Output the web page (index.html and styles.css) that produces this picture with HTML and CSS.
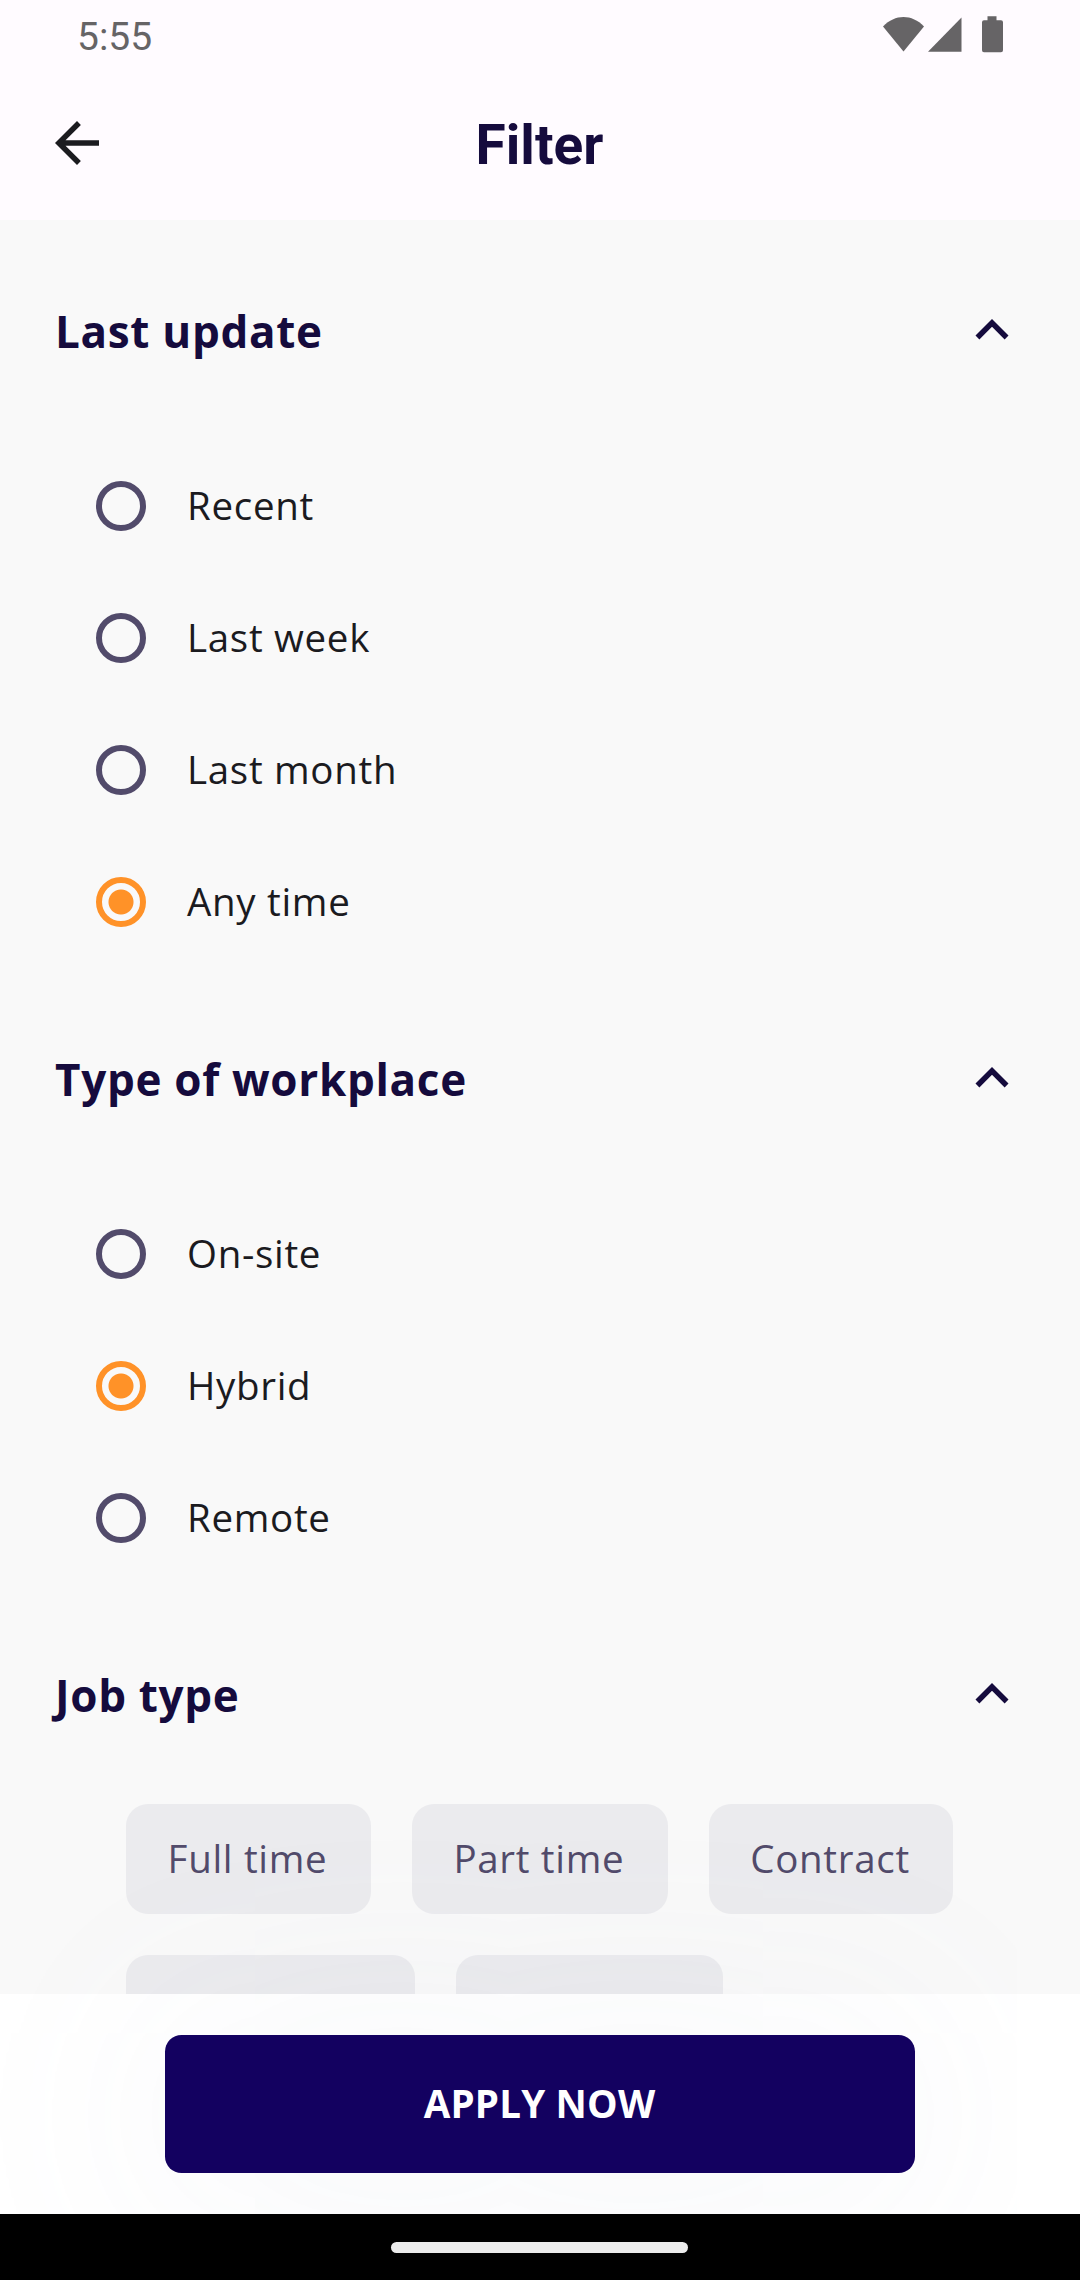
FILE: index.html
```html
<!DOCTYPE html>
<html lang="en">
<head>
<meta charset="utf-8">
<title>Filter</title>
<link rel="stylesheet" href="styles.css">
</head>
<body>
<svg class="defs" width="0" height="0">
  <symbol id="chevron-up" viewBox="0 0 24 24"><path d="M12 8l-6 6 1.41 1.41L12 10.83l4.59 4.58L18 14z"/></symbol>
</svg>
<div class="screen">
  <header class="top">
    <div class="status">
      <span class="clock">5:55</span>
      <svg class="status-icons" width="122" height="38" viewBox="0 0 122 38" fill="#666466">
        <path d="M1 11.500C13-1.200 30-1.200 42 11.500L21.500 36.500z"/>
        <path d="M79.500 2.500V36.800H46z"/>
        <path d="M105.500 1.300h9v4h4.500q2 0 2 2v28q0 2-2 2h-17q-2 0-2-2V7.300q0-2 2-2h3.500z"/>
      </svg>
    </div>
    <div class="appbar">
      <svg class="back" viewBox="0 0 24 24"><path d="M20 11H7.830l5.590-5.590L12 4l-8 8 8 8 1.410-1.410L7.830 13H20z"/></svg>
      <h1 class="title">Filter</h1>
    </div>
  </header>
  <main class="content">
    <section>
      <div class="section-head"><h2>Last update</h2><svg class="chevron"><use href="#chevron-up"/></svg></div>
      <div class="option"><span class="radio"></span><span class="label">Recent</span></div>
      <div class="option"><span class="radio"></span><span class="label">Last week</span></div>
      <div class="option"><span class="radio"></span><span class="label">Last month</span></div>
      <div class="option"><span class="radio checked"></span><span class="label">Any time</span></div>
    </section>
    <section>
      <div class="section-head"><h2>Type of workplace</h2><svg class="chevron"><use href="#chevron-up"/></svg></div>
      <div class="option"><span class="radio"></span><span class="label">On-site</span></div>
      <div class="option"><span class="radio checked"></span><span class="label">Hybrid</span></div>
      <div class="option"><span class="radio"></span><span class="label">Remote</span></div>
    </section>
    <section>
      <div class="section-head"><h2>Job type</h2><svg class="chevron"><use href="#chevron-up"/></svg></div>
      <div class="chips">
        <span class="chip">Full time</span>
        <span class="chip">Part time</span>
        <span class="chip">Contract</span>
        <span class="chip chip-wide"></span>
        <span class="chip chip-mid"></span>
      </div>
    </section>
  </main>
  <footer class="bottom">
    <button class="apply">APPLY NOW</button>
  </footer>
  <div class="navbar"><span class="handle"></span></div>
</div>
</body>
</html>
```
FILE: styles.css
```css
* { box-sizing: border-box; }
body { margin: 0; font-family: "Open Sans", "Noto Sans", sans-serif; }
h1, h2 { margin: 0; }
.defs { display: block; width: 0; height: 0; }

.screen {
  display: flex;
  flex-direction: column;
  width: 1080px;
  height: 2280px;
  overflow: hidden;
  background: #f9f9f9;
}

.top { flex: none; height: 220px; background: #fffbff; }
.status {
  display: flex;
  justify-content: space-between;
  align-items: flex-start;
  height: 66px;
  padding: 15px 76px 0 77px;
}
.clock {
  font: 400 39px/45px Roboto, sans-serif;
  color: #666466;
}
.appbar {
  display: grid;
  grid-template-columns: 66px 1fr 66px;
  align-items: center;
  height: 154px;
  padding: 0 44px;
}
.back { width: 66px; height: 66px; fill: #1b1b1f; }
.title {
  padding: 4px 1px 0 0;
  font: 700 55px/66px Roboto, sans-serif;
  color: #150b3d;
  text-align: center;
}

.content { flex: 1; min-height: 0; overflow: hidden; }
.section-head {
  display: flex;
  justify-content: space-between;
  align-items: center;
  height: 220px;
  padding: 0 55px;
}
.section-head h2 {
  padding-top: 2px;
  font-size: 44px;
  line-height: 60px;
  font-weight: 700;
  letter-spacing: 0.6875px;
  color: #150b3d;
}
.chevron { width: 66px; height: 66px; fill: #150b3d; }

.option {
  display: flex;
  align-items: center;
  gap: 41px;
  height: 132px;
  padding-left: 96px;
  font-size: 38.5px;
  line-height: 52px;
  letter-spacing: 0.6875px;
  color: #1b1b1f;
}
.label { padding-bottom: 2px; }
.radio {
  width: 50px;
  height: 50px;
  border: 6px solid #524b6b;
  border-radius: 50%;
}
.radio.checked {
  border-color: #ff9228;
  background: radial-gradient(circle, #ff9228 12px, transparent 13px);
}

.chips {
  display: flex;
  flex-wrap: wrap;
  gap: 41px;
  padding: 0 110px 0 126px;
}
.chip {
  height: 110px;
  padding: 0 43.4px 0 41.6px;
  border-radius: 22px;
  background: #ebebee;
  font-size: 38.5px;
  line-height: 108px;
  letter-spacing: 0.6875px;
  color: #524b6b;
}
.chip-wide { width: 289px; }
.chip-mid { width: 267px; }

.bottom {
  flex: none;
  display: flex;
  justify-content: center;
  align-items: center;
  height: 220px;
  background: #fff;
}
.apply {
  width: 750px;
  height: 137.5px;
  padding: 0 1px 2px 0;
  border: 0;
  border-radius: 16.5px;
  background: #130160;
  box-shadow: 0 11px 240px rgba(140, 150, 175, 0.1);
  font: 700 38.5px/52px "Open Sans", sans-serif;
  letter-spacing: 0.2px;
  color: #fff;
}
.navbar {
  position: relative;
  flex: none;
  display: flex;
  justify-content: center;
  align-items: center;
  height: 66px;
  padding-right: 1px;
  background: #000;
}
.handle { width: 297px; height: 11px; border-radius: 6px; background: #ececec; }
```
